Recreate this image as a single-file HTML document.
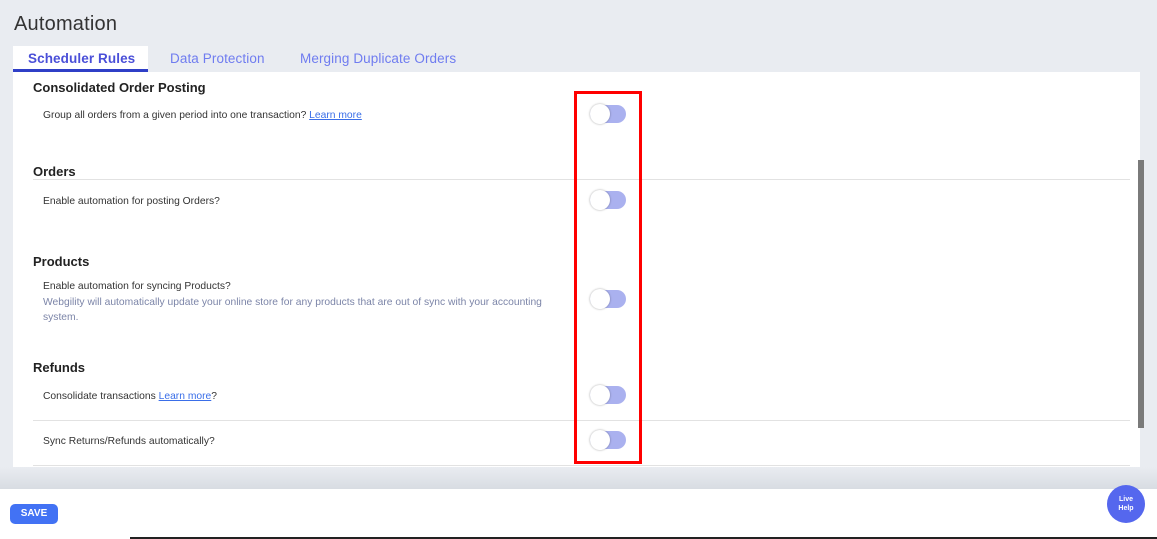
<!DOCTYPE html>
<html><head><style>
*{margin:0;padding:0;box-sizing:border-box}
body{width:1157px;height:539px;overflow:hidden;background:#e9ecf1;font-family:"Liberation Sans",sans-serif;position:relative}
.a{position:absolute}
h1{position:absolute;left:14px;top:13px;font-size:20px;font-weight:normal;color:#333;letter-spacing:.2px}
.tab{position:absolute;top:51px;font-size:13.5px;color:#6f7cf0;letter-spacing:.1px}
.panel{position:absolute;left:13px;top:72px;width:1127px;height:395px;background:#fff}
.h{position:absolute;left:33px;font-size:13px;font-weight:bold;color:#222}
.l{position:absolute;left:43px;font-size:10.3px;color:#333}
.s{position:absolute;left:43px;font-size:10.3px;color:#7c85a8;line-height:15px}
.line{position:absolute;left:33px;width:1097px;height:1px;background:#e2e2e2}
.tg{position:absolute;left:590px;width:36px;height:18px;border-radius:9px;background:#aab1ef}
.tg:after{content:"";position:absolute;left:0;top:-1px;width:20px;height:20px;border-radius:50%;background:#fff;box-shadow:0 0 2px rgba(0,0,0,.35)}
a{color:#3a6ee8;text-decoration:underline}
</style></head><body>
<h1>Automation</h1>
<div class="a" style="left:13px;top:46px;width:135px;height:26px;background:#fff"></div>
<div class="a" style="left:13px;top:69px;width:135px;height:3px;background:#2f3fc7"></div>
<div class="tab" style="left:28px;color:#4a4fd8;font-weight:bold">Scheduler Rules</div>
<div class="tab" style="left:170px">Data Protection</div>
<div class="tab" style="left:300px">Merging Duplicate Orders</div>
<div class="panel"></div>
<div class="a" style="left:1138px;top:160px;width:6px;height:268px;background:#7a7a7a"></div>
<div class="h" style="top:80px">Consolidated Order Posting</div>
<div class="l" style="top:110px">Group all orders from a given period into one transaction? <a>Learn more</a></div>
<div class="h" style="top:164px">Orders</div>
<div class="line" style="top:179px"></div>
<div class="l" style="top:196px">Enable automation for posting Orders?</div>
<div class="h" style="top:254px">Products</div>
<div class="l" style="top:281px">Enable automation for syncing Products?</div>
<div class="s" style="top:295px">Webgility will automatically update your online store for any products that are out of sync with your accounting<br>system.</div>
<div class="h" style="top:360px">Refunds</div>
<div class="l" style="top:391px">Consolidate transactions <a>Learn more</a>?</div>
<div class="line" style="top:420px"></div>
<div class="l" style="top:436px">Sync Returns/Refunds automatically?</div>
<div class="line" style="top:465px"></div>
<div class="tg" style="top:105px"></div>
<div class="tg" style="top:191px"></div>
<div class="tg" style="top:290px"></div>
<div class="tg" style="top:386px"></div>
<div class="tg" style="top:431px"></div>
<div class="a" style="left:574px;top:91px;width:68px;height:373px;border:3px solid #f00"></div>
<div class="a" style="left:0;top:467px;width:1157px;height:22px;background:linear-gradient(#e9ecf1,#d8dce2)"></div>
<div class="a" style="left:0;top:489px;width:1157px;height:50px;background:#fff"></div>
<div class="a" style="left:130px;top:537px;width:1027px;height:2px;background:#222"></div>
<div class="a" style="left:10px;top:504px;width:48px;height:20px;border-radius:5px;background:#4272f4;color:#fff;font-size:10px;font-weight:bold;text-align:center;line-height:20px">SAVE</div>
<div class="a" style="left:1107px;top:485px;width:38px;height:38px;border-radius:50%;background:#5567ee;color:#fff;font-size:7px;font-weight:bold;text-align:center;line-height:9px;padding-top:10px">Live<br>Help</div>
</body></html>
